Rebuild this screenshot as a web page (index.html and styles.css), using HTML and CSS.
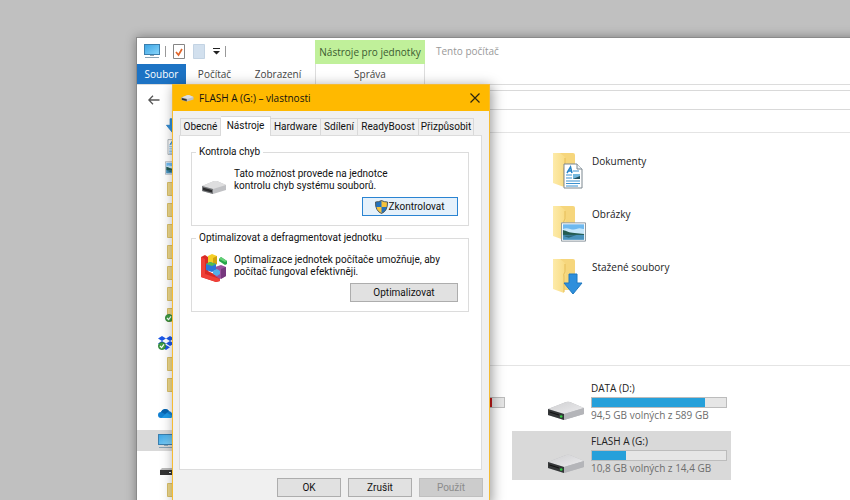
FILE: index.html
```html
<!DOCTYPE html>
<html lang="cs">
<head>
<meta charset="utf-8">
<title>Tento počítač</title>
<link rel="stylesheet" href="styles.css">
</head>
<body>
<svg class="defs" aria-hidden="true">
  <defs>
    <linearGradient id="sky" x1="0" y1="0" x2="1" y2="1"><stop offset="0" stop-color="#3aa4e4"/><stop offset="1" stop-color="#8ad6fb"/></linearGradient>
    <linearGradient id="fold" x1="0" y1="0" x2="1" y2="0"><stop offset="0" stop-color="#fdebaa"/><stop offset="1" stop-color="#f8da80"/></linearGradient>
    <linearGradient id="metal" x1="0" y1="0" x2="1" y2="1"><stop offset="0" stop-color="#cfcfd1"/><stop offset="1" stop-color="#ececee"/></linearGradient>
    <symbol id="pc" viewBox="0 0 16 16">
      <rect x="0.5" y="1.5" width="15" height="10" fill="url(#sky)" stroke="#3b7fae"/>
      <path d="M6 12h4v1H6z" fill="#8fa5b3"/><path d="M1 14h14v1H1z" fill="#8aa3b4"/>
    </symbol>
    <symbol id="small-folder" viewBox="0 0 16 16">
      <path d="M.5 1.5h5l1 1.500h9v11.500H.5z" fill="#edd88b" stroke="#d9c06c"/>
    </symbol>
    <symbol id="arrow" viewBox="0 0 20 22"><path d="M6 1h8v9h5l-9 11-9-11h5z" fill="#2e8fdc" stroke="#1f78c0"/></symbol>
    <symbol id="document" viewBox="0 0 20 26">
      <path d="M1 1h13l5 5v19H1z" fill="#fff" stroke="#7d8890"/><path d="M14 1v5h5" fill="#eef2f5" stroke="#7d8890"/>
      <path d="M4 10 7.500 4 9 10M5 8h4" fill="none" stroke="#2583c8" stroke-width="1.500"/>
      <path d="M10 8h6M3 12h6M3 15h6M3 18h14M3 20.500h14M3 23h12" stroke="#3b91cf"/><path d="M10 11h7v5h-7z" fill="#73b8de"/><path d="m10 16 7-3v3z" fill="#24505c"/>
    </symbol>
    <symbol id="picture" viewBox="0 0 26 20">
      <path d="M.5.5h25v19H.5z" fill="#fff" stroke="#8a959c"/><path d="M2 2h22v16H2z" fill="#6fb9ef"/>
      <path d="M2 7c5-3 9 2 14 0 4-2 6 0 8 0v5H2z" fill="#c7e7fa"/><path d="M2 8c4 1 6 3 12 3l10 1v1H2z" fill="#245b50"/><path d="M2 13h22v5H2z" fill="#4a93bd"/><path d="m2 14 14-1-8 3z" fill="#2b6878"/>
    </symbol>
    <symbol id="folder" viewBox="0 0 34 36">
      <path d="M6 1h15q2 0 2 2v29H6z" fill="#f6d67c"/><path d="M1 1h7l5 4v6q2 2 1 4l-2 20L1 31z" fill="url(#fold)"/><path d="M13 6v8q-2 2-1 5v15" fill="none" stroke="#e5bd59"/>
    </symbol>
    <symbol id="drive" viewBox="0 0 38 20">
      <path d="M1 8 19 1q2-.6 4 0l14 6v6L17 19 1 14z" fill="#b9babd"/>
      <path d="M1 8 19 1q2-.6 4 0l14 6-20 6z" fill="url(#metal)"/>
      <path d="M1 8l16 5v6L1 14z" fill="#343638"/><path d="M2.500 10.500 12 13.500v1L2.500 11.500z" fill="#111"/><circle cx="14.200" cy="15.500" r="1.300" fill="#33cf45"/><path d="m17 13 20-6v6l-20 6z" fill="#b4b5b9"/>
    </symbol>
    <symbol id="usb" viewBox="0 0 26 14">
      <path d="M1 6 13 1h3l9 4v5l-13 4-11-3z" fill="#c0c1c4"/><path d="M1 6 13 1h3l9 4-13 4z" fill="#dededf"/><path d="m1 6 11 3v5L1 11z" fill="#77797c"/><path d="m2 7.500 9 2.500v2.500L2 10.300z" fill="#2b2c2e"/>
    </symbol>
    <symbol id="check" viewBox="0 0 10 10"><circle cx="5" cy="5" r="4.500" fill="#3f9f43" stroke="#2c7b36"/><path d="m2.500 5 2 2 3-4" fill="none" stroke="#fff" stroke-width="1.500"/></symbol>
  </defs>
</svg>

<main class="explorer">
  <header class="titlebar">
    <div class="quick">
      <svg width="16" height="16"><use href="#pc"/></svg>
      <span class="bar"></span>
      <svg class="page" width="12" height="15" viewBox="0 0 12 15"><path d="M.5.500h11v14H.5z" fill="#fff" stroke="#858585"/><path d="m3 8 2.500 3L9 5" fill="none" stroke="#e0652a" stroke-width="1.700"/></svg>
      <svg class="page" width="12" height="15" viewBox="0 0 12 15"><path d="M.5.500h11v14H.5z" fill="#d2e0ee" stroke="#c3d3e3"/></svg>
      <svg width="7" height="8" viewBox="0 0 7 8"><path d="M0 1h7v1H0zM0 4h7L3.500 7.500z" fill="#222"/></svg>
      <span class="bar"></span>
    </div>
    <div class="context">Nástroje pro jednotky</div>
    <h1>Tento počítač</h1>
  </header>
  <nav class="ribbon">
    <button class="file">Soubor</button>
    <button>Počítač</button>
    <button class="view">Zobrazení</button>
    <button class="manage">Správa</button>
  </nav>
  <div class="address">
    <button class="back" aria-label="←"><svg width="12" height="10" viewBox="0 0 12 10"><path d="M5 .8.800 5 5 9.200M1 5h10.500" fill="none" stroke="#555" stroke-width="1.300"/></svg></button>
    <div class="path"></div>
  </div>
  <div class="panes">
    <aside class="tree">
      <div class="branch">
        <div class="row wide"><svg width="16" height="16"><use href="#arrow"/></svg></div>
        <div class="row"><svg width="13" height="16"><use href="#document"/></svg></div>
        <div class="row wide"><svg width="17" height="14"><use href="#picture"/></svg></div>
        <div class="row"><svg width="16" height="16"><use href="#small-folder"/></svg></div>
        <div class="row"><svg width="16" height="16"><use href="#small-folder"/></svg></div>
        <div class="row"><svg width="16" height="16"><use href="#small-folder"/></svg></div>
        <div class="row"><svg width="16" height="16"><use href="#small-folder"/></svg></div>
        <div class="row"><svg width="16" height="16"><use href="#small-folder"/></svg></div>
        <div class="row"><svg width="16" height="16"><use href="#small-folder"/></svg></div>
        <div class="row"><svg width="16" height="16"><use href="#small-folder"/></svg><svg class="badge" width="8" height="8"><use href="#check"/></svg></div>
      </div>
      <div class="branch">
        <div class="row root"><svg width="16" height="14" viewBox="0 0 16 14"><path d="m4 0 4 2.500L4 5 0 2.500zM12 0l4 2.500L12 5 8 2.500zM4 5l4 2.500L4 10 0 7.500zM12 5l4 2.500-4 2.500-4-2.500zM8 9l4 2.300L8 14l-4-2.700z" fill="#1a56e8"/></svg><svg class="badge" width="8" height="8"><use href="#check"/></svg></div>
        <div class="row"><svg width="16" height="16"><use href="#small-folder"/></svg></div>
        <div class="row"><svg width="16" height="16"><use href="#small-folder"/></svg></div>
      </div>
      <div class="branch">
        <div class="row root"><svg width="16" height="10" viewBox="0 0 16 10"><path d="M3 10a3 3 0 0 1 0-6 4.500 4.500 0 0 1 8-1 4 4 0 0 1 2 7z" fill="#1180d2"/><path d="m3 10 6-5 6 3q-1 2-3 2z" fill="#1f9be8"/><path d="M3 4a4.500 4.500 0 0 1 8-1L7 6z" fill="#0763ae"/></svg></div>
      </div>
      <div class="branch">
        <div class="row root selected"><svg width="16" height="16"><use href="#pc"/></svg></div>
      </div>
      <div class="branch">
        <div class="row root low"><svg width="14" height="7" viewBox="0 0 14 7"><path d="M2 0h10l2 2H0z" fill="#bbb"/><path d="M0 2h14v5H0z" fill="#333"/><path d="M9 4h2v1H9z" fill="#dfe7ea"/></svg></div>
        <div class="row"><svg width="16" height="16"><use href="#small-folder"/></svg></div>
      </div>
    </aside>
    <div class="content">
      <section class="tiles folders">
        <a class="tile" href="#"><span class="pic"><svg width="34" height="36"><use href="#folder"/></svg><svg class="over" width="20" height="26"><use href="#document"/></svg></span><span>Dokumenty</span></a>
        <a class="tile" href="#"><span class="pic"><svg width="34" height="36"><use href="#folder"/></svg><svg class="over" width="25" height="20"><use href="#picture"/></svg></span><span>Obrázky</span></a>
        <a class="tile" href="#"><span class="pic"><svg width="34" height="36"><use href="#folder"/></svg><svg class="over" width="20" height="22"><use href="#arrow"/></svg></span><span>Stažené soubory</span></a>
      </section>
      <section class="tiles drives">
        <div class="tile first"><span></span><span class="info"><span class="meter"><i class="full" style="width:91%"></i></span></span></div>
        <a class="tile" href="#"><svg width="38" height="20"><use href="#drive"/></svg><span class="info"><span>DATA (D:)</span><span class="meter"><i style="width:84%"></i></span><span class="free">94,5 GB volných z 589 GB</span></span></a>
        <a class="tile selected" href="#"><svg width="38" height="20"><use href="#drive"/></svg><span class="info"><span>FLASH A (G:)</span><span class="meter"><i style="width:25%"></i></span><span class="free">10,8 GB volných z 14,4 GB</span></span></a>
      </section>
    </div>
  </div>
</main>

<div class="dialog" role="dialog" aria-labelledby="dialog-title">
  <header class="caption">
    <svg width="13" height="8"><use href="#usb"/></svg>
    <h2 id="dialog-title">FLASH A (G:) – vlastnosti</h2>
    <button class="close" aria-label="×"><svg width="10" height="10" viewBox="0 0 10 10"><path d="m.5.500 9 9m0-9-9 9" stroke="#2c2410" stroke-width="1.200"/></svg></button>
  </header>
  <div class="tabs" role="tablist">
    <button role="tab">Obecné</button>
    <button role="tab" class="active" aria-selected="true">Nástroje</button>
    <button role="tab">Hardware</button>
    <button role="tab">Sdílení</button>
    <button role="tab">ReadyBoost</button>
    <button role="tab">Přizpůsobit</button>
  </div>
  <div class="panel" role="tabpanel">
    <fieldset>
      <legend>Kontrola chyb</legend>
      <div class="tool">
        <svg class="device" width="26" height="14"><use href="#usb"/></svg>
        <p>Tato možnost provede na jednotce<br>kontrolu chyb systému souborů.</p>
      </div>
      <button class="button primary"><svg width="13" height="14" viewBox="0 0 13 14"><path d="M6.500.500Q9 2 12.500 2q.3 9-6 11.500Q.2 11 .5 2 4 2 6.500.500z" fill="#f6c33c"/><path d="M6.500.500Q4 2 .5 2q0 2.500.4 5h5.600zM6.500 7h5.600q-1 4.500-5.600 6.500z" fill="#2472bd"/><path d="M6.500.500Q9 2 12.500 2q.3 9-6 11.500Q.2 11 .5 2 4 2 6.500.500z" fill="none" stroke="#4d5a60"/></svg>Zkontrolovat</button>
    </fieldset>
    <fieldset>
      <legend>Optimalizovat a defragmentovat jednotku</legend>
      <div class="tool">
        <svg width="26" height="28" viewBox="0 0 26 28">
          <path d="m0 3 4-2 3 2v14l12 6v4l-4 1L0 23z" fill="#d92a24"/><path d="m0 3 4 2v15l15 5v2l-4 1L0 23z" fill="#ef4038"/>
          <path d="m7 2 4-2 5 2v8l-4 2-5-2z" fill="#f5cf26"/><path d="m12 4 4-2v8l-4 2z" fill="#d1a30d"/>
          <path d="m14 13 6-2 5 2v9l-6 3-5-3z" fill="#99519d"/><path d="m20 15 5-2v9l-5 3z" fill="#76377e"/>
          <path d="m5 10 4-2 6 2v6l-4 2-6-2z" fill="#2c76d8"/><path d="m5 10 4-2 6 2-4 2z" fill="#53bf4c"/>
          <path d="m12 17 4-2 3 2v3l-3 2-4-2z" fill="#54afe7"/>
          <path d="m18 5 2-2 6 4v3l-2 1-6-4z" fill="#27a64a"/><path d="m18 5 2-2 6 4-2 1z" fill="#62cf75"/>
        </svg>
        <p>Optimalizace jednotek počítače umožňuje, aby<br>počítač fungoval efektivněji.</p>
      </div>
      <button class="button wide">Optimalizovat</button>
    </fieldset>
  </div>
  <footer class="actions">
    <button class="button">OK</button>
    <button class="button">Zrušit</button>
    <button class="button" disabled>Použít</button>
  </footer>
</div>
</body>
</html>
```
FILE: styles.css
```css
* { box-sizing: border-box; }
html, body { height: 100%; }
body {
  margin: 0;
  position: relative;
  overflow: hidden;
  background: #c0c0c0;
  color: #222;
  font: 10px/14px "Open Sans", "Noto Sans", sans-serif;
}
button { margin: 0; padding: 0; border: 0; background: none; color: inherit; font: inherit; }
h1, h2, p { margin: 0; font: inherit; }
a { color: inherit; text-decoration: none; }
svg { display: block; flex: none; }
.defs { position: absolute; width: 0; height: 0; }

/* Explorer window */
.explorer {
  position: absolute;
  inset: 37px -20px -20px 136px;
  display: flex;
  flex-direction: column;
  border: 1px solid #8a8a8a;
  background: #fff;
  box-shadow: 0 0 10px rgba(0, 0, 0, .35);
}
.titlebar { display: flex; height: 26px; }
.quick { display: flex; align-items: center; gap: 8px; width: 178px; padding-left: 7px; }
.quick .bar { width: 1px; height: 11px; margin: 0 -3px; background: #999; }
.quick .page { margin-left: 2px; }
.quick .page + .page { margin-left: 0; }
.context { width: 110px; margin-top: 2px; padding-top: 5px; background: #c0f09a; color: #3b5a30; text-align: center; white-space: nowrap; }
.titlebar h1 { padding: 6px 11px; color: #999; }
.ribbon { display: flex; height: 21px; border-bottom: 1px solid #dcdcdc; color: #444; }
.ribbon button { width: 57px; }
.ribbon .file { width: 49px; background: #1d73c4; color: #fff; }
.ribbon .view { width: 70px; margin-right: 2px; }
.ribbon .manage { width: 110px; border: solid #ddd; border-width: 0 1px; }
.address { display: flex; height: 30px; padding-top: 5px; }
.back { width: 34px; height: 20px; display: grid; place-items: center; }
.path { flex: 1; height: 20px; margin-left: 70px; border: 1px solid #d9d9d9; }
.panes { flex: 1; display: flex; min-height: 0; }
.tree { width: 145px; overflow: hidden; }
.branch { margin-bottom: 7px; }
.row { position: relative; display: flex; align-items: center; height: 21px; padding-left: 30px; }
.row.wide { padding-left: 28px; }
.row.root { padding-left: 21px; }
.row.selected { background: #d9d9d9; }
.row.low { padding: 5px 0 0 23px; }
.badge { position: absolute; left: 28px; bottom: 3px; }
.root .badge { left: 21px; }
.content { flex: 1; padding-top: 17px; }
.tiles { display: grid; grid-template-columns: 219px 219px; grid-auto-rows: 49px; gap: 4px 3px; padding: 15px 8px 0; border-top: 1px solid #e4e4e4; }
.folders { height: 233px; }
.tile { grid-column: 2; display: flex; gap: 6px; white-space: nowrap; }
.folders .tile { padding: 4px 0 0 40px; }
.folders .tile > span:last-child { padding-top: 2px; }
.pic { position: relative; width: 34px; }
.over { position: absolute; right: 3px; bottom: 8px; }
.tile:nth-child(2) .over { right: 0; }
.drives { padding-top: 12px; }
.drives .tile { padding: 3px 4px 0 35px; }
.drives .tile > svg { margin-top: 20px; }
.drives .first { grid-column: 1; }
.drives .first > span:first-child { width: 38px; }
.drives .first .info { padding-top: 14px; }
.drives .first + .tile { grid-row: 1; }
.info { flex: 1; display: flex; flex-direction: column; }
.meter { height: 11px; margin-top: 2px; border: 1px solid #bcbcbc; background: #e6e6e6; }
.meter i { display: block; height: 100%; background: #26a0da; }
.meter .full { background: #c41a1a; }
.free { color: #6d6d6d; }
.tile.selected { background: #d9d9d9; }

/* Properties dialog */
.dialog {
  position: absolute;
  inset: 84px auto -4px 172px;
  width: 318px;
  display: flex;
  flex-direction: column;
  border: 1px solid #f5bb32;
  background: #f0f0f0;
  box-shadow: 2px 2px 12px rgba(0, 0, 0, .4);
  color: #111;
  font: 10px/12px Roboto, "Liberation Sans", sans-serif;
  white-space: nowrap;
}
.caption { display: flex; align-items: center; gap: 5px; height: 26px; padding: 0 8px; background: #ffb900; font-family: "Open Sans", "Noto Sans", sans-serif; }
.close { margin-left: auto; width: 12px; height: 12px; display: grid; place-items: center; }
.tabs { display: grid; grid-template-columns: 41px 50px 50px 37px 61px 55px; align-items: end; height: 24px; padding-left: 7px; }
.tabs button { height: 17px; border: 1px solid #d9d9d9; border-width: 1px 1px 0 0; }
.tabs button:first-child { border-left-width: 1px; }
.tabs .active { position: relative; height: 20px; margin-bottom: -1px; padding-bottom: 2px; background: #fff; z-index: 1; }
.panel { flex: 1; margin: 0 7px 0 6px; padding: 10px 12px 10px 11px; border: 1px solid #dcdcdc; background: #fff; }
fieldset { margin: 0 0 6px; padding: 0; height: 80px; border: 1px solid #dcdcdc; }
legend { margin-left: 4px; padding: 0 3px; }
.tool { display: flex; gap: 7px; height: 39px; padding: 10px 0 0 9px; }
.tool .device { margin-top: 12px; }
.button { display: flex; align-items: center; justify-content: center; width: 64px; height: 19px; border: 1px solid #adadad; background: #e1e1e1; }
.button:disabled { background: #ccc; border-color: #bfbfbf; color: #8b8b8b; }
fieldset .button { margin: 0 10px 0 auto; }
.button.primary { width: 96px; border-color: #2a84d2; background: #e5f1fb; }
.button.wide { width: 108px; }
.actions { display: flex; justify-content: flex-end; gap: 7px; padding: 8px 6px 6px; height: 33px; }
```
